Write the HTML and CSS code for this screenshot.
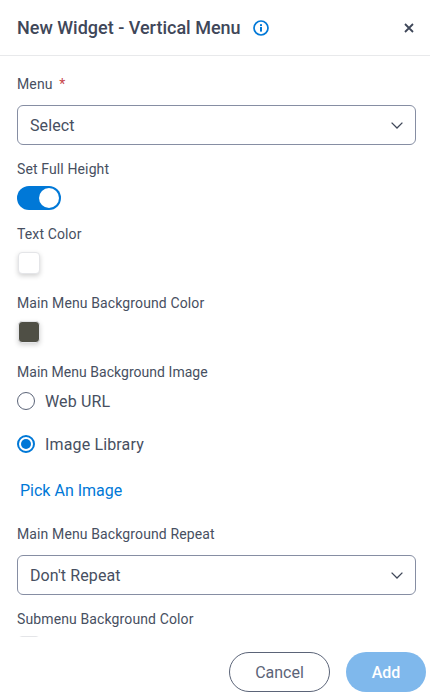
FILE: index.html
```html
<!DOCTYPE html>
<html lang="en">
<head>
  <meta charset="UTF-8">
  <title>New Widget - Vertical Menu</title>
  <link rel="stylesheet" href="styles.css">
</head>
<body>
  <div class="panel">
    <div class="panel-header">
      <h1>New Widget - Vertical Menu</h1>
      <svg class="info-icon" viewBox="0 0 16 16" width="16" height="16">
        <circle cx="8" cy="8" r="7" fill="none" stroke="#0078d7" stroke-width="1.7"/>
        <rect x="7" y="7" width="2" height="4.6" fill="#0078d7"/>
        <rect x="7" y="4.2" width="2" height="1.9" fill="#0078d7"/>
      </svg>
      <svg class="close-icon" viewBox="0 0 10 10" width="10" height="10">
        <path d="M1 1L9 9M9 1L1 9" fill="none" stroke="#3f4759" stroke-width="1.8"/>
      </svg>
    </div>

    <div class="panel-body">
      <div class="field field-menu">
        <label>Menu <span class="required">*</span></label>
        <div class="select">
          <span>Select</span>
          <svg viewBox="0 0 12 7" width="12" height="7"><path d="M0.6 0.6L6 6L11.4 0.6" fill="none" stroke="#3f4759" stroke-width="1.3"/></svg>
        </div>
      </div>

      <div class="field field-toggle">
        <label>Set Full Height</label>
        <div class="toggle"><div class="knob"></div></div>
      </div>

      <div class="field field-swatch">
        <label>Text Color</label>
        <div class="swatch"></div>
      </div>

      <div class="field field-swatch">
        <label>Main Menu Background Color</label>
        <div class="swatch dark"></div>
      </div>

      <div class="field field-radio">
        <label>Main Menu Background Image</label>
        <div class="radio-row"><span class="radio"></span>Web URL</div>
        <div class="radio-row"><span class="radio checked"></span>Image Library</div>
      </div>

      <a class="pick-link" href="#">Pick An Image</a>

      <div class="field field-repeat">
        <label>Main Menu Background Repeat</label>
        <div class="select">
          <span>Don't Repeat</span>
          <svg viewBox="0 0 12 7" width="12" height="7"><path d="M0.6 0.6L6 6L11.4 0.6" fill="none" stroke="#3f4759" stroke-width="1.3"/></svg>
        </div>
      </div>

      <div class="field field-sub">
        <label>Submenu Background Color</label>
        <div class="swatch"></div>
      </div>
    </div>

    <div class="panel-footer">
      <button class="btn-cancel">Cancel</button>
      <button class="btn-add">Add</button>
    </div>
  </div>
</body>
</html>
```
FILE: styles.css
```css
html, body {
  margin: 0;
  height: 100%;
  overflow: hidden;
}
body {
  font-family: Roboto, "Liberation Sans", sans-serif;
  color: #474f61;
  background-color: #fff;
}
.panel {
  width: 430px;
  height: 696px;
  display: flex;
  flex-direction: column;
}
.panel-header {
  height: 56px;
  box-sizing: border-box;
  flex: none;
  display: flex;
  align-items: center;
  padding: 0 15px 0 17px;
  border-bottom: 1px solid #e8e9eb;
}
.panel-header h1 {
  margin: 0;
  font-size: 18px;
  font-weight: 500;
  line-height: 24px;
  color: #3f4759;
}
.info-icon {
  margin-left: 12px;
}
.close-icon {
  margin-left: auto;
  margin-right: 1px;
}
.panel-body {
  height: 581px;
  box-sizing: border-box;
  flex: none;
  overflow: hidden;
  padding: 19px 14px 0 17px;
}
.field label {
  display: block;
  font-size: 14px;
  line-height: 18px;
  letter-spacing: 0.12px;
}
.required {
  color: #c8474c;
  margin-left: 3px;
}
.field-menu .select {
  margin-top: 12px;
}
.select {
  height: 40px;
  box-sizing: border-box;
  border: 1px solid #868ea3;
  border-radius: 6px;
  display: flex;
  align-items: center;
  justify-content: space-between;
  padding: 0 12px;
  font-size: 16px;
  letter-spacing: 0.1px;
}
.field-toggle {
  margin-top: 15px;
}
.toggle {
  width: 44px;
  height: 24px;
  margin-top: 8px;
  box-sizing: border-box;
  padding: 2px;
  border-radius: 12px;
  background-color: #0078d7;
  display: flex;
  justify-content: flex-end;
}
.knob {
  width: 20px;
  height: 20px;
  border-radius: 50%;
  background-color: #fff;
}
.field-swatch {
  margin-top: 15px;
}
.field-swatch + .field-swatch {
  margin-top: 20px;
}
.swatch {
  width: 22px;
  height: 22px;
  margin: 9px 0 0 1px;
  border: 1px solid #e4e5e8;
  border-radius: 4px;
  box-sizing: border-box;
  background-color: #fff;
  box-shadow: 0 2px 5px rgba(0, 0, 0, 0.18);
}
.swatch.dark {
  background-color: #4f4f45;
  border-color: #e4e5e8;
}
.field-radio {
  margin-top: 20px;
}
.field-radio label {
  letter-spacing: 0.03px;
}
.radio-row {
  display: flex;
  align-items: center;
  gap: 10px;
  height: 18px;
  margin-top: 11px;
  font-size: 16px;
  letter-spacing: 0.15px;
}
.radio-row + .radio-row {
  margin-top: 25px;
}
.radio {
  width: 18px;
  height: 18px;
  box-sizing: border-box;
  border: 1px solid #5b6478;
  border-radius: 50%;
  background-color: #fff;
}
.radio.checked {
  border: 2px solid #0078d7;
  padding: 2px;
  background-color: #0078d7;
  background-clip: content-box;
}
.pick-link {
  display: block;
  margin: 28px 0 0 3px;
  color: #0078d7;
  font-size: 16px;
  line-height: 20px;
  text-decoration: none;
}
.field-repeat {
  margin-top: 24px;
}
.field-repeat .select {
  margin-top: 12px;
}
.field-sub {
  margin-top: 15px;
}
.field-sub .swatch {
  margin-top: 8px;
  box-shadow: none;
}
.panel-footer {
  height: 59px;
  flex: none;
  display: flex;
  justify-content: flex-end;
  align-items: flex-start;
  gap: 16px;
  padding: 15px 4px 0 0;
  box-sizing: border-box;
  background-color: #fff;
}
.panel-footer button {
  height: 40px;
  border-radius: 20px;
  font-family: inherit;
  font-size: 16px;
}
.btn-cancel {
  width: 101px;
  border: 1px solid #5b6478;
  background-color: #fff;
  color: #5b6478;
}
.btn-add {
  width: 80px;
  border: none;
  background-color: #7fb8ec;
  color: #fff;
  font-weight: 500;
}
```
